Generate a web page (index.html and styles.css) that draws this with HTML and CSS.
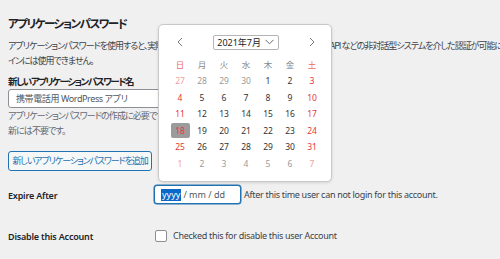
FILE: index.html
```html
<!DOCTYPE html>
<html lang="ja">
<head>
<meta charset="utf-8">
<link rel="stylesheet" href="styles.css">
</head>
<body>
<div class="page">
  <h2 class="title">アプリケーションパスワード</h2>
  <p class="intro"><span class="line">アプリケーションパスワードを使用すると、実際のパスワードを入力することなく XML-RPC や REST API などの非対話型システムを介した認証が可能になります。従来のサイトへのログ</span><span class="line">インには使用できません。</span></p>
  <div class="field">
    <label class="field-label">新しいアプリケーションパスワード名</label>
    <div class="text-input">携帯電話用 WordPress アプリ</div>
    <p class="desc"><span class="line">アプリケーションパスワードの作成に必要ですが、更</span><span class="line">新には不要です。</span></p>
  </div>
  <div class="btn">新しいアプリケーションパスワードを追加</div>

  <div class="form-table">
    <div class="row row-expire">
      <div class="row-label">Expire After</div>
      <div class="row-value">
        <div class="date-input"><span class="seg-sel">yyyy</span><span class="seg">/ mm / dd</span></div>
        <span class="note">After this time user can not login for this account.</span>
      </div>
    </div>
    <div class="row row-disable">
      <div class="row-label">Disable this Account</div>
      <div class="row-value">
        <span class="checkbox"></span>
        <span class="note">Checked this for disable this user Account</span>
      </div>
    </div>
  </div>

  <div class="calendar">
    <div class="cal-head">
      <svg class="arrow" width="8" height="10" viewBox="0 0 8 10"><path d="M6 1 L2 5 L6 9" fill="none" stroke="#7a7a7a" stroke-width="1"/></svg>
      <div class="month-sel"><span>2021年7月</span><svg width="9" height="6" viewBox="0 0 9 6"><path d="M0.5 0.8 L4.5 4.8 L8.5 0.8" fill="none" stroke="#6a6a6a" stroke-width="1"/></svg></div>
      <svg class="arrow" width="8" height="10" viewBox="0 0 8 10"><path d="M2 1 L6 5 L2 9" fill="none" stroke="#7a7a7a" stroke-width="1"/></svg>
    </div>
    <div class="cal-grid">
      <span class="wd red">日</span><span class="wd">月</span><span class="wd">火</span><span class="wd">水</span><span class="wd">木</span><span class="wd">金</span><span class="wd red">土</span>
      <span class="d other red">27</span><span class="d other">28</span><span class="d other">29</span><span class="d other">30</span><span class="d">1</span><span class="d">2</span><span class="d red">3</span>
      <span class="d red">4</span><span class="d">5</span><span class="d">6</span><span class="d">7</span><span class="d">8</span><span class="d">9</span><span class="d red">10</span>
      <span class="d red">11</span><span class="d">12</span><span class="d">13</span><span class="d">14</span><span class="d">15</span><span class="d">16</span><span class="d red">17</span>
      <span class="d red"><span class="today">18</span></span><span class="d">19</span><span class="d">20</span><span class="d">21</span><span class="d">22</span><span class="d">23</span><span class="d red">24</span>
      <span class="d red">25</span><span class="d">26</span><span class="d">27</span><span class="d">28</span><span class="d">29</span><span class="d">30</span><span class="d red">31</span>
      <span class="d other red">1</span><span class="d other">2</span><span class="d other">3</span><span class="d other">4</span><span class="d other">5</span><span class="d other">6</span><span class="d other red">7</span>
    </div>
  </div>
</div>
</body>
</html>
```

FILE: styles.css
```css
html, body {
  margin: 0;
  padding: 0;
  background: #f0f0f1;
  overflow: hidden;
}
body {
  width: 500px;
  height: 259px;
  font-family: "Noto Sans", "Noto Sans CJK JP", sans-serif;
  color: #3c434a;
  font-feature-settings: "palt";
}
.page {
  position: relative;
  padding: 0 8px;
  height: 259px;
  box-sizing: border-box;
  overflow: hidden;
}
.title {
  margin: 0;
  padding-top: 15px;
  font-size: 11.5px;
  line-height: 16px;
  letter-spacing: -1.5px;
  font-weight: 700;
  color: #1d2327;
  font-family: "Noto Sans CJK JP", sans-serif;
}
.intro {
  margin: 7px 0 0;
  font-size: 9px;
  line-height: 15px;
  letter-spacing: -1px;
  font-family: "Noto Sans CJK JP", sans-serif;
}
.line {
  display: block;
  white-space: nowrap;
}
.field {
  margin-top: 6px;
}
.field-label {
  display: block;
  font-size: 9.5px;
  line-height: 14px;
  letter-spacing: -1.5px;
  font-weight: 700;
  color: #1d2327;
  font-family: "Noto Sans CJK JP", sans-serif;
}
.text-input {
  margin-top: 1px;
  width: 200px;
  height: 19px;
  box-sizing: border-box;
  border: 1px solid #8c8f94;
  border-radius: 3px;
  background: #fff;
  padding: 0 7px;
  font-size: 9px;
  letter-spacing: -0.4px;
  line-height: 17px;
  color: #50575e;
  white-space: nowrap;
}
.desc {
  margin: 0;
  font-size: 9px;
  line-height: 15px;
  letter-spacing: -0.9px;
  color: #646970;
  font-family: "Noto Sans CJK JP", sans-serif;
}
.btn {
  margin-top: 13px;
  width: 144px;
  height: 20px;
  box-sizing: border-box;
  border: 1px solid #2271b1;
  border-radius: 3px;
  background: #f6f7f7;
  color: #2271b1;
  font-size: 9px;
  letter-spacing: -1.1px;
  line-height: 18px;
  text-align: center;
  white-space: nowrap;
  font-family: "Noto Sans CJK JP", sans-serif;
}
.form-table {
  margin-top: 14px;
}
.row {
  display: grid;
  grid-template-columns: 146px 1fr;
  align-items: center;
}
.row-label {
  font-size: 9px;
  letter-spacing: -0.2px;
  font-weight: 600;
  color: #1d2327;
  padding-top: 2px;
}
.row-value {
  display: flex;
  align-items: center;
}
.row-disable {
  margin-top: 24px;
}
.date-input {
  width: 87px;
  height: 19px;
  box-sizing: border-box;
  border: 1px solid #2271b1;
  box-shadow: 0 0 0 0.5px #2271b1;
  border-radius: 3px;
  background: #fff;
  padding: 0 0 0 6px;
  display: flex;
  align-items: center;
  font-size: 9px;
  color: #50575e;
}
.seg-sel {
  background: #0a68c8;
  color: #fff;
  padding: 0 1px;
  line-height: 12px;
}
.seg {
  margin-left: 2px;
}
.note {
  margin-left: 3px;
  font-size: 9px;
  letter-spacing: -0.3px;
  color: #3c434a;
  white-space: nowrap;
}
.checkbox {
  margin-left: 1px;
  width: 12px;
  height: 12px;
  box-sizing: border-box;
  border: 1px solid #8c8f94;
  border-radius: 2px;
  background: #fff;
  margin-right: 3px;
}
.calendar {
  position: absolute;
  left: 158px;
  top: 24px;
  width: 174px;
  height: 158px;
  box-sizing: border-box;
  background: #fff;
  border: 1px solid #c9c9c9;
  border-radius: 5px;
  box-shadow: 0 1px 3px rgba(0,0,0,0.12);
  padding: 10px 0 0 10px;
  font-family: "Noto Sans", "Noto Sans CJK JP", sans-serif;
  letter-spacing: 0;
}
.cal-head {
  display: flex;
  align-items: center;
  justify-content: space-between;
  width: 154px;
  height: 14px;
  padding: 0 7px;
  box-sizing: border-box;
  margin-bottom: 7px;
}
.month-sel {
  width: 66px;
  height: 15px;
  box-sizing: border-box;
  border: 1px solid #b4b4b4;
  border-radius: 2px;
  display: flex;
  align-items: center;
  justify-content: flex-end;
  gap: 4px;
  padding-right: 4px;
  font-size: 9px;
  color: #222;
}
.cal-grid {
  display: grid;
  grid-template-columns: repeat(7, 22px);
  grid-auto-rows: 16.5px;
  font-size: 8.5px;
}
.cal-grid > span {
  display: flex;
  align-items: center;
  justify-content: center;
  color: #333;
}
.cal-grid > .wd {
  color: #888;
  font-family: "Noto Sans CJK JP", sans-serif;
  font-size: 8.5px;
}
.cal-grid > .red {
  color: #e8363a;
}
.cal-grid > .wd.red {
  color: #f06a6a;
}
.cal-grid > .other {
  color: #9a9a9a;
}
.cal-grid > .other.red {
  color: #f3a0a0;
}
.today {
  width: 19px;
  height: 15px;
  border-radius: 2px;
  background: #9b9b9b;
  display: flex;
  align-items: center;
  justify-content: center;
  color: #e8363a;
}
```
